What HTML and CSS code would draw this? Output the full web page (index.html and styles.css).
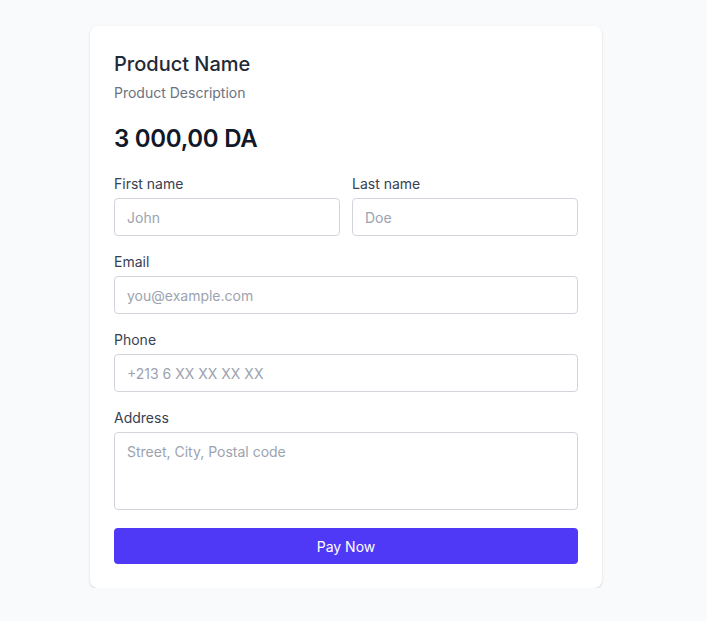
FILE: index.html
```html
<!DOCTYPE html>
<html lang="en">
<head>
<meta charset="utf-8">
<title>Checkout</title>
<link rel="stylesheet" href="styles.css">
</head>
<body>
<div class="page">
  <form class="card">
    <h1 class="title">Product Name</h1>
    <p class="desc">Product Description</p>
    <p class="price">3 000,00 DA</p>
    <div class="row">
      <div class="field">
        <label class="label">First name</label>
        <input class="input" placeholder="John">
      </div>
      <div class="field">
        <label class="label">Last name</label>
        <input class="input" placeholder="Doe">
      </div>
    </div>
    <div class="field">
      <label class="label">Email</label>
      <input class="input" placeholder="you@example.com">
    </div>
    <div class="field">
      <label class="label">Phone</label>
      <input class="input" placeholder="+213 6 XX XX XX XX">
    </div>
    <div class="field">
      <label class="label">Address</label>
      <textarea class="input textarea" placeholder="Street, City, Postal code"></textarea>
    </div>
    <button type="button" class="btn">Pay Now</button>
  </form>
</div>
</body>
</html>
```
FILE: styles.css
```css
* { box-sizing: border-box; }
html, body { margin: 0; padding: 0; }
body {
  background: #f9fafb;
  font-family: Inter, "Noto Sans", sans-serif;
  color: #1f2937;
}
.page {
  width: 692px;
  padding-top: 26px;
}
.card {
  width: 512px;
  margin: 0 auto;
  background: #fff;
  border-radius: 8px;
  box-shadow: 0 1px 3px rgba(0,0,0,0.1), 0 1px 2px rgba(0,0,0,0.06);
  padding: 24px;
  display: flex;
  flex-direction: column;
  gap: 16px;
}
.title {
  margin: 0;
  font-size: 20px;
  line-height: 28px;
  font-weight: 500;
  color: #1f2937;
}
.desc {
  margin: -11px 0 0;
  font-size: 14px;
  line-height: 20px;
  color: #6b7280;
}
.price {
  margin: 4px 0 3px;
  font-size: 24px;
  line-height: 32px;
  font-weight: 600;
  color: #111827;
  letter-spacing: -0.3px;
}
.row {
  display: grid;
  grid-template-columns: minmax(0, 1fr) minmax(0, 1fr);
  gap: 12px;
}
.field {
  display: flex;
  flex-direction: column;
  gap: 4px;
  min-width: 0;
}
.label {
  font-size: 14px;
  line-height: 20px;
  color: #374151;
}
.input {
  width: 100%;
  min-width: 0;
  height: 38px;
  border: 1px solid #d1d5db;
  border-radius: 4px;
  padding: 0 12px;
  font-family: inherit;
  font-size: 14px;
  color: #111827;
  background: #fff;
  outline: none;
}
.input::placeholder { color: #9ca3af; }
.textarea {
  height: 78px;
  padding: 9px 12px;
  resize: none;
  line-height: 20px;
  display: block;
}
.btn {
  margin-top: 2px;
  height: 36px;
  border: none;
  border-radius: 4px;
  background: #4f39f6;
  color: #fff;
  font-family: inherit;
  font-size: 14px;
  font-weight: 400;
}
```
